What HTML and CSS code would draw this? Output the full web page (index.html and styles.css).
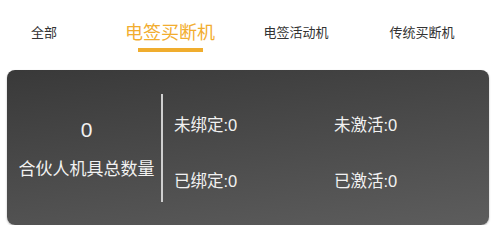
FILE: index.html
```html
<!DOCTYPE html>
<html lang="zh-CN">
<head>
    <meta charset="UTF-8">
    <meta name="viewport" content="width=device-width, initial-scale=1.0">
    <title>机具统计</title>
    <link rel="stylesheet" href="styles.css">
</head>
<body>
    <div class="tabs">
        <div class="tab">全部</div>
        <div class="tab active">电签买断机</div>
        <div class="tab">电签活动机</div>
        <div class="tab">传统买断机</div>
    </div>
    <div class="card">
        <div class="total">
            <div class="total-num">0</div>
            <div class="total-label">合伙人机具总数量</div>
        </div>
        <div class="divider"></div>
        <div class="stats">
            <div class="stat">未绑定:0</div>
            <div class="stat">未激活:0</div>
            <div class="stat">已绑定:0</div>
            <div class="stat">已激活:0</div>
        </div>
    </div>
</body>
</html>
```

FILE: styles.css
```css
body {
    margin: 0;
    font-family: "Liberation Sans", "Noto Sans CJK SC", sans-serif;
    background-color: #fff;
}
.tabs {
    display: flex;
    align-items: flex-start;
    height: 62px;
    box-sizing: border-box;
    padding-top: 23px;
    margin-left: -19px;
}
.tab {
    width: 126px;
    flex-shrink: 0;
    text-align: center;
    font-size: 13px;
    line-height: 20px;
    color: #333;
}
.tab.active {
    font-size: 18px;
    color: #f2ad2f;
}
.tab.active::after {
    content: "";
    display: block;
    width: 65px;
    height: 4px;
    margin: 5px auto 0;
    background-color: #f0ad2e;
}
.card {
    display: flex;
    align-items: flex-start;
    height: 155px;
    margin: 8px 5px 0 7px;
    border-radius: 8px;
    background: linear-gradient(172deg, #393939, #5d5d5d);
    box-shadow: 0 1px 2px rgba(0,0,0,0.3);
    color: #f2f2f2;
}
.total {
    width: 154px;
    box-sizing: border-box;
    flex-shrink: 0;
    padding: 48px 0 0 5px;
    text-align: center;
}
.total-num {
    font-size: 21px;
    line-height: 24px;
}
.total-label {
    margin-top: 16px;
    font-size: 17px;
    line-height: 24px;
}
.divider {
    width: 2px;
    height: 108px;
    margin-top: 24px;
    background-color: #cfcfcf;
}
.stats {
    display: grid;
    grid-template-columns: 160px 1fr;
    row-gap: 32px;
    padding: 43px 0 0 11px;
}
.stat {
    font-size: 16.5px;
    line-height: 24px;
}
```
